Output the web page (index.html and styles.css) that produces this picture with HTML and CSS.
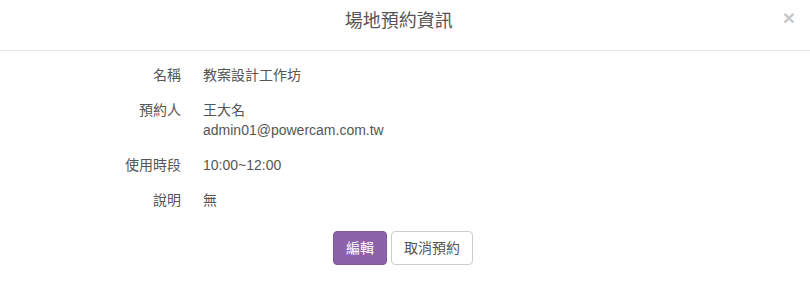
FILE: index.html
```html
<!DOCTYPE html>
<html lang="zh-Hant">
<head>
  <meta charset="UTF-8">
  <title>場地預約資訊</title>
  <link rel="stylesheet" href="styles.css">
</head>
<body>
  <div class="modal">
    <div class="modal-header">
      <h4 class="modal-title">場地預約資訊</h4>
      <button type="button" class="close">&times;</button>
    </div>

    <div class="modal-body">
      <div class="info-row">
        <div class="info-label">名稱</div>
        <div class="info-value">教案設計工作坊</div>
      </div>
      <div class="info-row">
        <div class="info-label">預約人</div>
        <div class="info-value">王大名<br>admin01@powercam.com.tw</div>
      </div>
      <div class="info-row">
        <div class="info-label">使用時段</div>
        <div class="info-value">10:00~12:00</div>
      </div>
      <div class="info-row">
        <div class="info-label">說明</div>
        <div class="info-value">無</div>
      </div>

      <div class="actions">
        <button type="button" class="btn btn-primary">編輯</button>
        <button type="button" class="btn btn-default">取消預約</button>
      </div>
    </div>
  </div>
</body>
</html>
```

FILE: styles.css
```css
body {
  margin: 0;
  background: #fff;
  font-family: "Liberation Sans", Arial, "Noto Sans CJK TC", sans-serif;
  font-size: 14px;
  line-height: 20px;
  color: #555;
}
.modal {
  width: 810px;
}
.modal-header {
  display: flex;
  align-items: flex-start;
  padding: 8px 15px 15px;
  border-bottom: 1px solid #e5e5e5;
}
.modal-title {
  flex: 1;
  margin: 0;
  font-size: 18px;
  font-weight: normal;
  line-height: 27px;
  text-align: center;
  color: #555;
}
.close {
  margin-top: -2px;
  padding: 0;
  border: none;
  background: none;
  font-family: "Liberation Sans", Arial, sans-serif;
  font-size: 21px;
  font-weight: bold;
  line-height: 24px;
  color: #c8c8c8;
  cursor: pointer;
}
.modal-body {
  padding: 14px 15px 28px;
}
.info-row {
  display: grid;
  grid-template-columns: 166px 1fr;
  column-gap: 22px;
  margin-bottom: 15px;
}
.info-label {
  text-align: right;
}
.actions {
  display: flex;
  justify-content: center;
  gap: 4px;
  margin-top: 21px;
  padding-right: 4px;
}
.btn {
  padding: 6px 12px;
  border: 1px solid transparent;
  border-radius: 4px;
  font-family: inherit;
  font-size: 14px;
  line-height: 20px;
  cursor: pointer;
}
.btn-primary {
  background: #8c62aa;
  border-color: #8259a0;
  color: #fff;
}
.btn-default {
  background: #fff;
  border-color: #ccc;
  color: #555;
}
```
